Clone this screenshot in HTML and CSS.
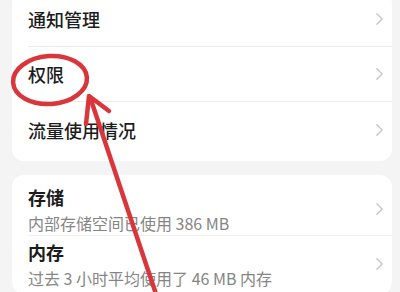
FILE: index.html
```html
<!DOCTYPE html>
<html lang="zh-CN">
<head>
<meta charset="utf-8">
<link rel="stylesheet" href="styles.css">
</head>
<body>
<div class="page">
  <div class="card card-top">
    <div class="row first"><span class="label">通知管理</span><svg class="chev" viewBox="0 0 8 14"><polyline points="1,1 7,7 1,13"/></svg></div>
    <div class="row"><span class="label">权限</span><svg class="chev" viewBox="0 0 8 14"><polyline points="1,1 7,7 1,13"/></svg></div>
    <div class="row last"><span class="label">流量使用情况</span><svg class="chev" viewBox="0 0 8 14"><polyline points="1,1 7,7 1,13"/></svg></div>
  </div>
  <div class="card card-bottom">
    <div class="row2 r1">
      <div class="texts"><div class="title">存储</div><div class="sub">内部存储空间已使用 386 MB</div></div>
      <svg class="chev" viewBox="0 0 8 14"><polyline points="1,1 7,7 1,13"/></svg>
    </div>
    <div class="row2 r2">
      <div class="texts"><div class="title">内存</div><div class="sub">过去 3 小时平均使用了 46 MB 内存</div></div>
      <svg class="chev" viewBox="0 0 8 14"><polyline points="1,1 7,7 1,13"/></svg>
    </div>
  </div>
  <svg class="annot" viewBox="0 0 400 292" width="400" height="292">
    <ellipse cx="50" cy="80" rx="37" ry="24" transform="rotate(-4 50 80)"/>
    <line x1="156" y1="294" x2="90" y2="97"/>
    <polyline points="86,124 89,96 109,111"/>
  </svg>
</div>
</body>
</html>
```
FILE: styles.css
```css
html, body {
  margin: 0;
  padding: 0;
}
body {
  background: #f4f4f4;
  font-family: "Noto Sans CJK SC", "Noto Sans", sans-serif;
  color: #1c1c1c;
  width: 400px;
  height: 292px;
  overflow: hidden;
}
.page {
  position: relative;
  width: 400px;
  height: 292px;
  overflow: hidden;
}
.card {
  background: #ffffff;
  margin: 0 8px 0 12px;
  border-radius: 12px;
}
.card-top {
  margin-top: -8px;
  padding-bottom: 4px;
}
.card-bottom {
  margin-top: 14px;
}
.row {
  height: 55px;
  display: flex;
  align-items: center;
  justify-content: space-between;
  margin-left: 16px;
  padding-right: 9px;
  border-bottom: 1px solid #ececec;
  box-sizing: border-box;
}
.row.last {
  border-bottom: none;
}
.label {
  font-size: 18px;
  font-weight: 500;
  line-height: 24px;
}
.chev {
  width: 7px;
  height: 14px;
  flex: none;
}
.chev polyline {
  fill: none;
  stroke: #c6c6c6;
  stroke-width: 1.6;
  stroke-linecap: round;
  stroke-linejoin: round;
}
.row2 {
  display: flex;
  align-items: center;
  justify-content: space-between;
  margin-left: 16px;
  padding-right: 9px;
}
.row2.r1 {
  padding-top: 10px;
  padding-bottom: 2px;
  border-bottom: 1px solid #f0f0f0;
}
.row2.r2 {
  padding-top: 4px;
  padding-bottom: 6px;
}
.texts {
  display: flex;
  flex-direction: column;
  gap: 4px;
}
.title {
  font-size: 18px;
  font-weight: 700;
  line-height: 24px;
}
.sub {
  font-size: 16px;
  line-height: 20px;
  color: #858585;
}
.annot {
  position: absolute;
  left: 0;
  top: 0;
}
.annot ellipse, .annot line, .annot polyline {
  fill: none;
  stroke: #d9363b;
  stroke-linecap: round;
  stroke-linejoin: round;
}
.annot ellipse {
  stroke-width: 4.5;
}
.annot line {
  stroke-width: 4.5;
}
.annot polyline {
  stroke-width: 4.5;
}
```
